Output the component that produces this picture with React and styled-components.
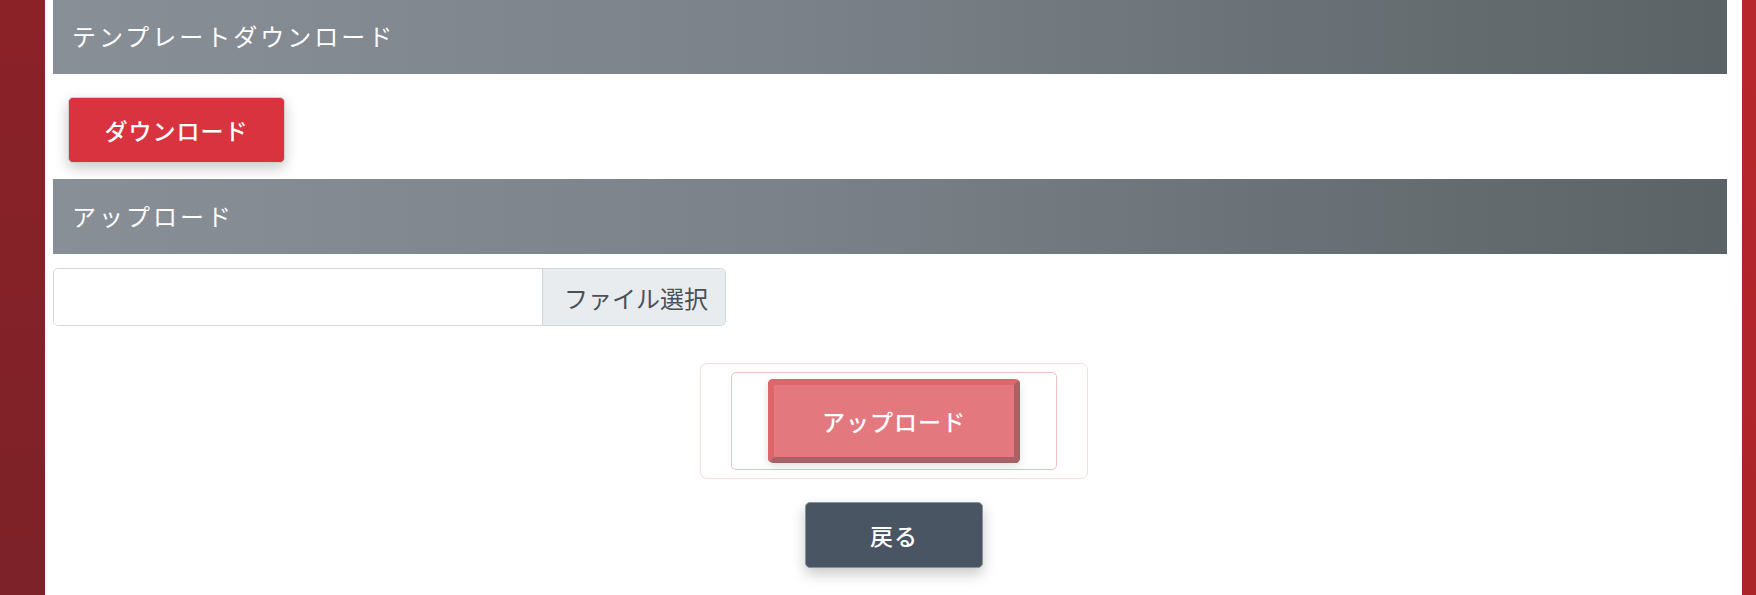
import React from "react";
import styled, { createGlobalStyle } from "styled-components";

const GlobalStyle = createGlobalStyle`
  html, body { margin: 0; padding: 0; background: #fff; }
  body { font-family: "Noto Sans CJK JP", "Noto Sans", sans-serif; }
  * { box-sizing: border-box; }
`;

const Frame = styled.div`
  display: flex;
  min-height: 595px;
  height: 100vh;
  overflow: hidden;
`;

const SideBar = styled.div`
  flex: 0 0 ${(p) => p.$w}px;
  background: ${(p) => p.$bg};
`;

const Main = styled.main`
  flex: 1;
  padding: 0 15px 0 8px;
  display: flex;
  flex-direction: column;
`;

const SectionHeader = styled.h2`
  margin: 0;
  height: ${(p) => p.$h}px;
  display: flex;
  align-items: center;
  padding: 0 0 3px 19px;
  background: linear-gradient(90deg, #888f97 0%, #7a8188 45%, #5b6366 100%);
  color: #fff;
  font-size: 24px;
  font-weight: 400;
  letter-spacing: 3px;
`;

const DownloadRow = styled.div`
  padding: 23px 0 16px 15px;
`;

const Button = styled.button`
  font-family: "Noto Sans CJK JP", "Noto Sans", sans-serif;
  color: #fff;
  font-size: 23px;
  font-weight: 500;
  letter-spacing: 1px;
  border-radius: 5px;
  cursor: pointer;
  display: inline-flex;
  align-items: center;
  justify-content: center;
`;

const DangerButton = styled(Button)`
  width: 217px;
  height: 66px;
  background: #d9333f;
  border: 1px solid #cfcfcf;
  box-shadow: 0 5px 14px rgba(0, 0, 0, 0.22);
`;

const FileGroup = styled.div`
  margin-top: 14px;
  width: 673px;
  height: 58px;
  display: flex;
  border: 1px solid #d3d7db;
  border-radius: 5px;
  overflow: hidden;
`;

const FileField = styled.div`
  flex: 1;
  background: #fff;
`;

const FileButton = styled.div`
  display: flex;
  align-items: center;
  padding: 0 17px 0 21px;
  background: #e9ecef;
  border-left: 1px solid #d3d7db;
  color: #495057;
  font-size: 24px;
`;

const CenterColumn = styled.div`
  display: flex;
  flex-direction: column;
  align-items: center;
  padding-left: 8px;
`;

const OuterBox = styled.div`
  margin-top: 37px;
  padding: 8px 30px;
  border: 1px solid #f6dede;
  border-radius: 7px;
`;

const InnerBox = styled.div`
  padding: 6px 36px;
  border: 1px solid #efc0c0;
  border-radius: 5px;
`;

const UploadButton = styled(Button)`
  width: 252px;
  height: 84px;
  background: #e4787f;
  border: 6px solid;
  border-color: #dc666b #a86165 #a86165 #dc666b;
  border-radius: 5px;
  box-shadow: 0 3px 10px rgba(0, 0, 0, 0.12);
`;

const BackButton = styled(Button)`
  margin-top: 23px;
  width: 178px;
  height: 66px;
  background: #495563;
  border: 1px solid #8a929b;
  box-shadow: 0 6px 14px rgba(0, 0, 0, 0.22);
`;

export default function App() {
  return (
    <>
      <GlobalStyle />
      <Frame>
        <SideBar $w={45} $bg="linear-gradient(180deg, #8b2228, #7c2228)" />
        <Main>
          <SectionHeader $h={74}>テンプレートダウンロード</SectionHeader>
          <DownloadRow>
            <DangerButton>ダウンロード</DangerButton>
          </DownloadRow>
          <SectionHeader $h={75}>アップロード</SectionHeader>
          <FileGroup>
            <FileField />
            <FileButton>ファイル選択</FileButton>
          </FileGroup>
          <CenterColumn>
            <OuterBox>
              <InnerBox>
                <UploadButton>アップロード</UploadButton>
              </InnerBox>
            </OuterBox>
            <BackButton>戻る</BackButton>
          </CenterColumn>
        </Main>
        <SideBar $w={14} $bg="linear-gradient(180deg, #b7262b, #ab2428)" />
      </Frame>
    </>
  );
}
